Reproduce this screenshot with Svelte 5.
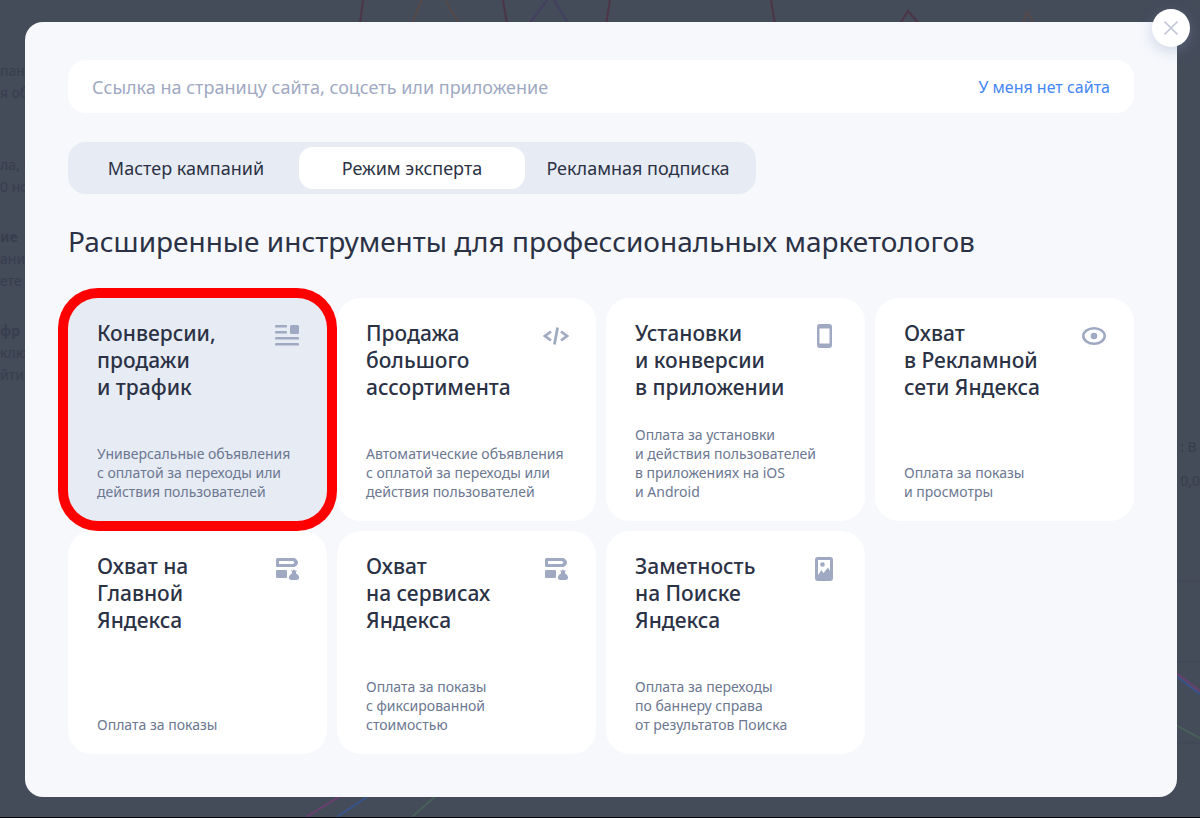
<script lang="ts">
    type Icon = "feed" | "code" | "phone" | "eye" | "banner" | "picture";

    const tabs = ["Мастер кампаний", "Режим эксперта", "Рекламная подписка"];

    const cards: { title: string; text: string; icon: Icon }[] = [
        { title: "Конверсии,\nпродажи\nи трафик", text: "Универсальные объявления\nс оплатой за переходы или\nдействия пользователей", icon: "feed" },
        { title: "Продажа\nбольшого\nассортимента", text: "Автоматические объявления\nс оплатой за переходы или\nдействия пользователей", icon: "code" },
        { title: "Установки\nи конверсии\nв приложении", text: "Оплата за установки\nи действия пользователей\nв приложениях на iOS\nи Android", icon: "phone" },
        { title: "Охват\nв Рекламной\nсети Яндекса", text: "Оплата за показы\nи просмотры", icon: "eye" },
        { title: "Охват на\nГлавной\nЯндекса", text: "Оплата за показы", icon: "banner" },
        { title: "Охват\nна сервисах\nЯндекса", text: "Оплата за показы\nс фиксированной\nстоимостью", icon: "banner" },
        { title: "Заметность\nна Поиске\nЯндекса", text: "Оплата за переходы\nпо баннеру справа\nот результатов Поиска", icon: "picture" },
    ];

    let activeTab = $state(1);
    let selected = $state(0);
    let url = $state("");
</script>

<div class="page">
    <!-- Dimmed page under the dialog -->
    <div class="backdrop" aria-hidden="true">
        <svg class="chart" viewBox="0 0 1200 818" preserveAspectRatio="none" fill="none" stroke-width="2">
            <path stroke="#4c3546" d="M363 0 L360 24 M503 0 L508 30 M610 0 L605 30 M771 0 L776 30 M896 30 L908 11 L924 30" />
            <path stroke="#554a4a" d="M422 0 L409 30 M445 0 L463 30 M1020 30 L1027 12 L1038 30" />
            <path stroke="#433f60" d="M547 0 L525 30 M554 0 L572 30" />
            <path stroke="#6a4071" d="M306 818 L345 794 M1174 672 L1200 692" />
            <path stroke="#39548a" d="M337 818 L373 794 M1174 675 L1200 695" />
            <path stroke="#48605a" d="M412 818 L439 794 M1174 725 L1200 739" />
            <path stroke="#404757" stroke-width="1" d="M1177 582 H1200 M1177 663 H1200 M1177 744 H1200" />
        </svg>
        <div class="side left">
            <p class="intro">пани<br />я об</p>
            <p>ла, в<br />0 но</p>
            <p><b>ие</b><br />ани<br />ете</p>
            <p><b>фр</b><br />клю<br />йти</p>
        </div>
        <div class="side right">
            <p>: В</p>
            <p>0,0</p>
        </div>
    </div>

    <div class="dialog" role="dialog" aria-modal="true" aria-labelledby="dialog-title">
        <button class="close" type="button" aria-label="Закрыть">
            <svg width="14" height="14" viewBox="0 0 14 14" fill="none" stroke="#c5c8d7" stroke-width="1.6">
                <path d="M0.5 0.5 L13.5 13.5 M13.5 0.5 L0.5 13.5" />
            </svg>
        </button>

        <div class="url">
            <input type="text" bind:value={url} placeholder="Ссылка на страницу сайта, соцсеть или приложение" aria-label="Ссылка на страницу сайта" />
            <a href="#no-site">У меня нет сайта</a>
        </div>

        <div class="tabs" role="tablist">
            {#each tabs as tab, i}
                <button type="button" role="tab" class="tab" class:active={activeTab === i} aria-selected={activeTab === i} onclick={() => (activeTab = i)}>{tab}</button>
            {/each}
        </div>

        <h1 id="dialog-title">Расширенные инструменты для профессиональных маркетологов</h1>

        <div class="cards">
            {#each cards as card, i}
                <button type="button" class="card" class:selected={selected === i} aria-pressed={selected === i} onclick={() => (selected = i)}>
                    <span class="head">
                        <span class="title">{card.title}</span>
                        <svg class="icon" width="26" height="26" viewBox="0 0 26 26" fill="#9fa9c2">
                            {#if card.icon === "feed"}
                                <rect x="1" y="2" width="12" height="2.600" rx="1.2" />
                                <rect x="1" y="8" width="12" height="2.600" rx="1.2" />
                                <rect x="1" y="14" width="24" height="2.600" rx="1.2" />
                                <rect x="1" y="20" width="24" height="2.600" rx="1.2" />
                                <rect x="16" y="2" width="9" height="9" rx="1.6" />
                            {:else if card.icon === "code"}
                                <path d="M8 8.5 L2 13 L8 17.5 M18 8.5 L24 13 L18 17.5 M14.6 4.5 L11.4 21.5" fill="none" stroke="#9fa9c2" stroke-width="2.8" />
                            {:else if card.icon === "phone"}
                                <path fill-rule="evenodd" d="M8 1 H17 Q20 1 20 4 V22 Q20 25 17 25 H8 Q5 25 5 22 V4 Q5 1 8 1 Z M7.500 5.500 V20.500 H17.500 V5.500 Z" />
                            {:else if card.icon === "eye"}
                                <ellipse cx="13" cy="13" rx="10.700" ry="7.700" fill="none" stroke="#9fa9c2" stroke-width="2.600" />
                                <circle cx="13" cy="13" r="3.3" />
                            {:else if card.icon === "banner"}
                                <path fill-rule="evenodd" d="M3.500 2 H20.500 Q24 4 24 6.500 Q24 9 20.500 11 H3.500 Q2 11 2 9.500 V3.500 Q2 2 3.500 2 Z M5 5 V8 H19 L20.500 6.500 L19 5 Z" />
                                <rect x="2" y="14" width="11" height="8" rx="1" />
                                <path d="M17 14 L18.500 14.700 L20 13.500 L21.500 14.700 L23 14 L22 16 V17.500 C26 19.500 26 24 22.500 24 H17.500 C14 24 14 19.500 18 17.500 V16 Z" />
                            {:else}
                                <path fill-rule="evenodd" d="M7 1 H18 Q21 1 21 4 V22 Q21 25 18 25 H6 Q3 25 3 22 V4 Q3 1 6 1 Z M6 4 V19 L9.500 14 L11.500 17 L16 11.500 L18 15 V4 Z" />
                                <circle cx="10.500" cy="8.500" r="2.300" />
                            {/if}
                        </svg>
                    </span>
                    <span class="text">{card.text}</span>
                </button>
            {/each}
        </div>
    </div>
</div>

<style>
    :global(body) {
        margin: 0;
        background: #444b59;
    }

    .page {
        position: relative;
        box-sizing: border-box;
        min-height: 100vh;
        padding: 22px 23px 21px 25px;
        font-family: "Noto Sans", "Open Sans", sans-serif;
        color: #2b3245;
    }

    .backdrop {
        position: absolute;
        inset: 0;
        border-bottom: 1px solid #05060a;
        color: #373e4d;
        font-size: 14px;
        line-height: 22px;
        white-space: nowrap;
    }

    .chart {
        position: absolute;
        width: 100%;
        height: 100%;
    }

    .side {
        position: absolute;
        display: grid;
    }

    .side p {
        margin: 0;
    }

    .left {
        top: 60px;
        left: 0;
        gap: 28px;
    }

    .left .intro {
        padding-bottom: 22px;
    }

    .right {
        top: 436px;
        right: 0;
        gap: 12px;
    }

    .dialog {
        position: relative;
        box-sizing: border-box;
        padding: 38px 43px 43px;
        border-radius: 18px;
        background: #f6f8fc;
    }

    .close {
        position: absolute;
        top: -13px;
        right: -13px;
        display: grid;
        place-items: center;
        width: 38px;
        height: 38px;
        padding: 0;
        border: 0;
        border-radius: 50%;
        background: #fff;
        box-shadow: 0 4px 14px rgba(130, 145, 185, 0.35);
        cursor: pointer;
    }

    .url {
        display: flex;
        align-items: center;
        gap: 24px;
        height: 53px;
        padding: 0 24px;
        border-radius: 18px;
        background: #fff;
    }

    .url input {
        flex: 1;
        min-width: 0;
        padding: 0;
        border: 0;
        outline: 0;
        background: none;
        font: inherit;
        font-size: 18px;
        color: inherit;
    }

    .url input::placeholder {
        color: #9fa9c2;
        opacity: 1;
    }

    .url a {
        font-size: 16px;
        color: #4486f5;
        text-decoration: none;
    }

    .tabs {
        display: grid;
        grid-template-columns: repeat(3, 1fr);
        box-sizing: border-box;
        max-width: 688px;
        margin-top: 29px;
        padding: 5px;
        border-radius: 18px;
        background: #e7ebf4;
    }

    .tab {
        height: 42px;
        padding: 0;
        border: 0;
        border-radius: 14px;
        background: none;
        font: inherit;
        font-size: 18px;
        color: inherit;
        white-space: nowrap;
        cursor: pointer;
    }

    .tab.active {
        background: #fff;
    }

    h1 {
        margin: 27px 0 37px;
        font-size: 28px;
        font-weight: 400;
        line-height: 40px;
    }

    .cards {
        display: grid;
        grid-template-columns: repeat(4, 1fr);
        gap: 10px;
    }

    .card {
        display: flex;
        flex-direction: column;
        justify-content: space-between;
        min-height: 223px;
        padding: 22px 27px 20px 29px;
        border: 0;
        border-radius: 24px;
        background: #fff;
        font: inherit;
        color: inherit;
        text-align: left;
        cursor: pointer;
    }

    .card.selected {
        position: relative;
        z-index: 1;
        border-radius: 30px;
        background: #e7ebf4;
        box-shadow: 0 0 0 10px #fe0000;
    }

    .head {
        display: flex;
        justify-content: space-between;
        align-self: stretch;
    }

    .title {
        font-size: 21px;
        font-weight: 500;
        line-height: 27px;
        white-space: pre-line;
    }

    .icon {
        flex: none;
        margin-top: 3px;
    }

    .text {
        font-size: 14px;
        line-height: 19px;
        color: #6c7791;
        white-space: pre-line;
    }
</style>
